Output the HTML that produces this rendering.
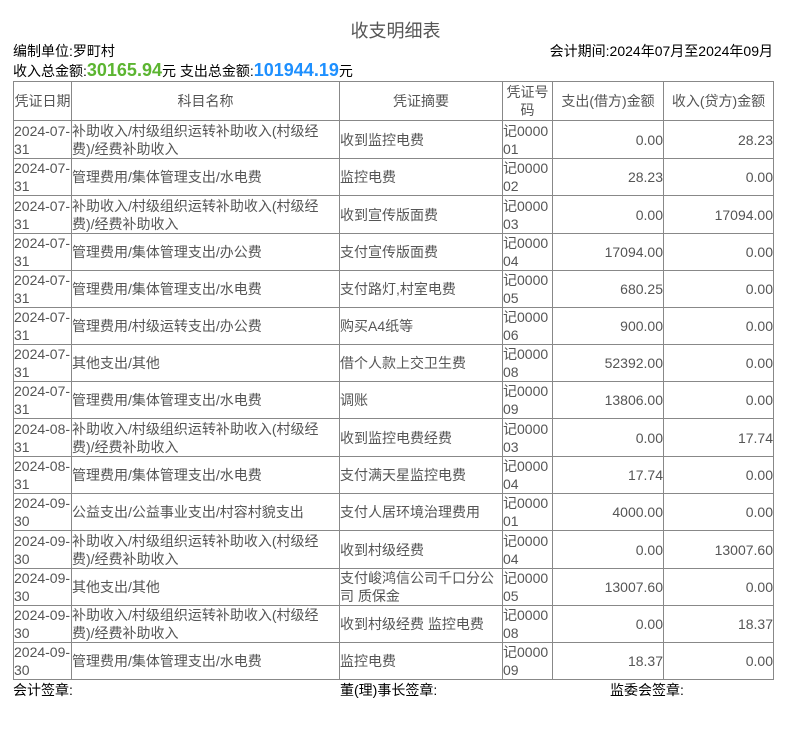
<!DOCTYPE html>
<html><head><meta charset="utf-8"><style>
body{margin:0;background:#fff;font-family:"Liberation Sans","Noto Sans CJK SC",sans-serif;font-size:14px;color:#000;}
.abs{position:absolute;white-space:nowrap;}
table{position:absolute;left:13px;top:81px;border-collapse:collapse;table-layout:fixed;width:760px;}
td{border:1px solid #888;color:#555;padding:0;line-height:18px;font-size:14px;vertical-align:middle;overflow:hidden;word-break:break-all;}
tr.h td{text-align:center;}
td.n{text-align:right;}
tr{height:37px;}
tr.t{height:38px;}
</style></head><body>
<div class="abs" style="left:0;width:791px;top:17px;text-align:center;font-size:18px;color:#555;">收支明细表</div>
<div class="abs" style="left:13px;top:41px;">编制单位:罗町村</div>
<div class="abs" style="right:18px;top:41px;">会计期间:2024年07月至2024年09月</div>
<div class="abs" style="left:13px;top:60px;">收入总金额:<b style="color:#5cb531;font-size:18px;">30165.94</b>元 支出总金额:<b style="color:#1e90ff;font-size:18px;">101944.19</b>元</div>
<table>
<colgroup><col style="width:58px"><col style="width:268px"><col style="width:163px"><col style="width:50px"><col style="width:111px"><col style="width:110px"></colgroup>
<tr class="h" style="height:39px"><td>凭证日期</td><td>科目名称</td><td>凭证摘要</td><td>凭证号码</td><td>支出(借方)金额</td><td>收入(贷方)金额</td></tr>
<tr class="t"><td>2024-07-31</td><td>补助收入/村级组织运转补助收入(村级经费)/经费补助收入</td><td>收到监控电费</td><td>记000001</td><td class="n">0.00</td><td class="n">28.23</td></tr>
<tr><td>2024-07-31</td><td>管理费用/集体管理支出/水电费</td><td>监控电费</td><td>记000002</td><td class="n">28.23</td><td class="n">0.00</td></tr>
<tr class="t"><td>2024-07-31</td><td>补助收入/村级组织运转补助收入(村级经费)/经费补助收入</td><td>收到宣传版面费</td><td>记000003</td><td class="n">0.00</td><td class="n">17094.00</td></tr>
<tr><td>2024-07-31</td><td>管理费用/集体管理支出/办公费</td><td>支付宣传版面费</td><td>记000004</td><td class="n">17094.00</td><td class="n">0.00</td></tr>
<tr><td>2024-07-31</td><td>管理费用/集体管理支出/水电费</td><td>支付路灯,村室电费</td><td>记000005</td><td class="n">680.25</td><td class="n">0.00</td></tr>
<tr><td>2024-07-31</td><td>管理费用/村级运转支出/办公费</td><td>购买A4纸等</td><td>记000006</td><td class="n">900.00</td><td class="n">0.00</td></tr>
<tr><td>2024-07-31</td><td>其他支出/其他</td><td>借个人款上交卫生费</td><td>记000008</td><td class="n">52392.00</td><td class="n">0.00</td></tr>
<tr><td>2024-07-31</td><td>管理费用/集体管理支出/水电费</td><td>调账</td><td>记000009</td><td class="n">13806.00</td><td class="n">0.00</td></tr>
<tr class="t"><td>2024-08-31</td><td>补助收入/村级组织运转补助收入(村级经费)/经费补助收入</td><td>收到监控电费经费</td><td>记000003</td><td class="n">0.00</td><td class="n">17.74</td></tr>
<tr><td>2024-08-31</td><td>管理费用/集体管理支出/水电费</td><td>支付满天星监控电费</td><td>记000004</td><td class="n">17.74</td><td class="n">0.00</td></tr>
<tr><td>2024-09-30</td><td>公益支出/公益事业支出/村容村貌支出</td><td>支付人居环境治理费用</td><td>记000001</td><td class="n">4000.00</td><td class="n">0.00</td></tr>
<tr class="t"><td>2024-09-30</td><td>补助收入/村级组织运转补助收入(村级经费)/经费补助收入</td><td>收到村级经费</td><td>记000004</td><td class="n">0.00</td><td class="n">13007.60</td></tr>
<tr><td>2024-09-30</td><td>其他支出/其他</td><td>支付峻鸿信公司千口分公司 质保金</td><td>记000005</td><td class="n">13007.60</td><td class="n">0.00</td></tr>
<tr><td>2024-09-30</td><td>补助收入/村级组织运转补助收入(村级经费)/经费补助收入</td><td>收到村级经费 监控电费</td><td>记000008</td><td class="n">0.00</td><td class="n">18.37</td></tr>
<tr><td>2024-09-30</td><td>管理费用/集体管理支出/水电费</td><td>监控电费</td><td>记000009</td><td class="n">18.37</td><td class="n">0.00</td></tr>
</table>
<div class="abs" style="left:13px;top:680px;">会计签章:</div>
<div class="abs" style="left:340px;top:680px;">董(理)事长签章:</div>
<div class="abs" style="left:610px;top:680px;">监委会签章:</div>
</body></html>
